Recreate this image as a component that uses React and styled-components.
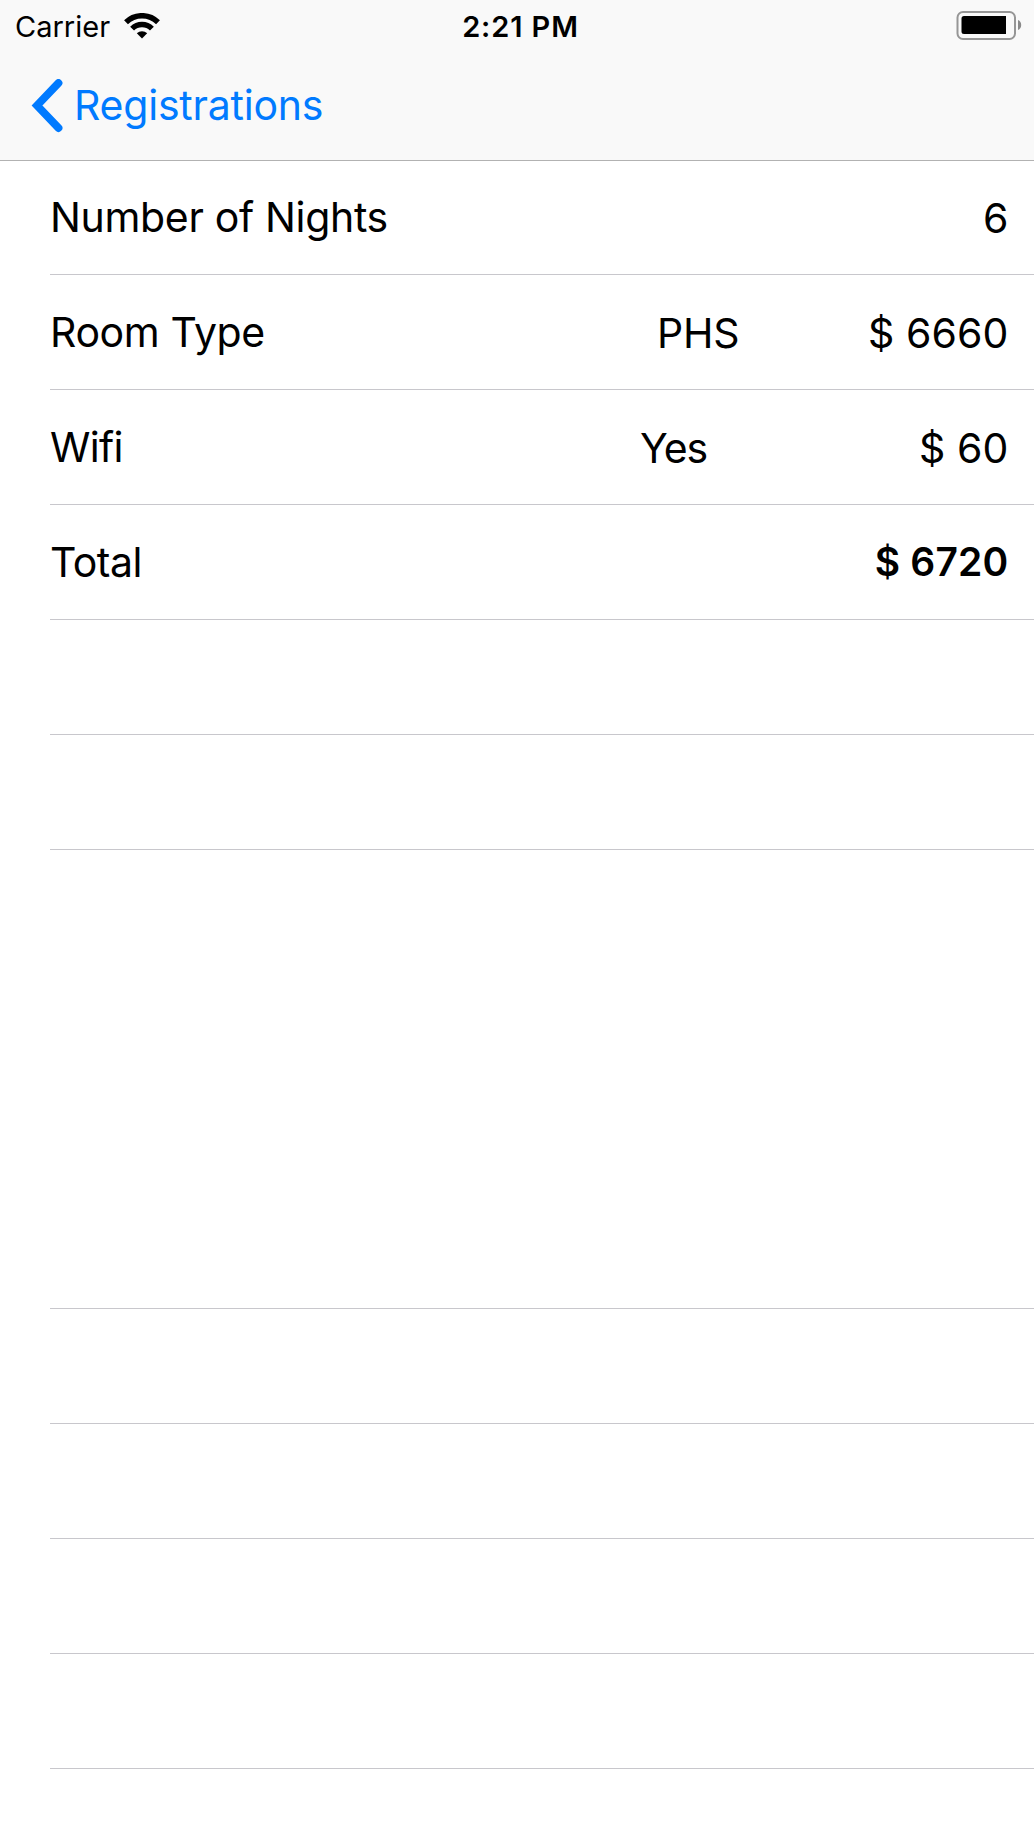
import React from "react";
import styled, { createGlobalStyle } from "styled-components";

const GlobalStyle = createGlobalStyle`
  * { box-sizing: border-box; }
  body {
    margin: 0;
    background: #fff;
    color: #000;
    font-family: Inter, "Liberation Sans", sans-serif;
  }
`;

const Screen = styled.div`
  width: 1034px;
  height: 1839px;
  display: flex;
  flex-direction: column;
  overflow: hidden;
  background: #fff;
`;

const Header = styled.header`
  height: 161px;
  background: #f9f9f9;
  border-bottom: 1px solid #b2b2b2;
`;

const StatusBar = styled.div`
  height: 50px;
  display: grid;
  grid-template-columns: 1fr auto 1fr;
  align-items: center;
  padding: 2px 12px 0 15px;
`;

const Carrier = styled.div`
  display: flex;
  align-items: center;
  gap: 14px;
  font-size: 29px;
  line-height: 36px;
`;

const CarrierName = styled.span`
  padding-top: 1px;
`;

const Clock = styled.div`
  padding: 1px 0 0 4px;
  font-size: 29px;
  line-height: 36px;
  font-weight: 600;
  letter-spacing: 0.9px;
  white-space: nowrap;
`;

const BatterySlot = styled.div`
  display: flex;
  justify-content: flex-end;
`;

const NavBar = styled.nav`
  height: 110px;
  display: flex;
  align-items: flex-start;
  padding: 29px 0 0 31px;
`;

const BackButton = styled.button`
  display: flex;
  align-items: center;
  gap: 11px;
  padding: 0;
  border: 0;
  background: none;
  color: #007aff;
  font: inherit;
  font-size: 41px;
  line-height: 52px;
  letter-spacing: -0.22px;
`;

const BackTitle = styled.span`
  padding-bottom: 2px;
`;

const List = styled.main`
  display: flex;
  flex-direction: column;
  padding-left: 50px;
`;

const Row = styled.div`
  height: ${(p) => p.$height || 115}px;
  flex: none;
  display: flex;
  align-items: center;
  padding: 0 25px ${(p) => p.$lift || 0}px 0;
  border-bottom: 1px solid #c8c7cc;
`;

const Text = styled.span`
  font-size: 41px;
  line-height: 50px;
  letter-spacing: ${(p) => p.$spacing || 0}px;
  white-space: nowrap;
`;

const Label = styled(Text)`
  width: ${(p) => p.$width || 500}px;
`;

const Detail = styled(Text)`
  padding-top: 2px;
`;

const Amount = styled(Text)`
  margin-left: auto;
  padding: 2px 0.5px 0 0;
  letter-spacing: 0.1px;
`;

const TotalAmount = styled(Amount)`
  padding: 0 0.5px 0 0;
  font-size: 39px;
  font-weight: 600;
  letter-spacing: 0.2px;
`;

const WifiIcon = () => (
  <svg width="36" height="26" viewBox="0 0 36 26" fill="none">
    <path d="M2 9.300a22.700 22.700 0 0 1 32 0" stroke="#000" strokeWidth="5.500" />
    <path d="M8.100 15.600a14 14 0 0 1 19.800 0" stroke="#000" strokeWidth="5.500" />
    <path d="M18 25.500l-5.200-5.200a7.400 7.400 0 0 1 10.400 0z" fill="#000" />
  </svg>
);

const BatteryIcon = () => (
  <svg width="66" height="30" viewBox="0 0 66 30">
    <rect x="1.500" y="1" width="57.500" height="27" rx="5.500" fill="none" stroke="#969696" strokeWidth="2" />
    <path d="M8 5h42v18H8a2.500 2.500 0 0 1-2.500-2.500v-13A2.500 2.500 0 0 1 8 5z" fill="#000" />
    <path d="M62 9a5.500 5.500 0 0 1 0 10z" fill="#8a8a8a" />
  </svg>
);

const Chevron = () => (
  <svg width="32" height="54" viewBox="0 0 32 54" fill="none">
    <path d="M27.500 4L6 26.500L27.500 49" stroke="#007aff" strokeWidth="7.800" strokeLinecap="round" strokeLinejoin="miter" />
  </svg>
);

const charges = [
  { label: "Number of Nights", amount: "6", height: 114, spacing: -0.33, lift: 1 },
  { label: "Room Type", detail: "PHS", amount: "$ 6660", start: 607, spacing: -0.4, detailSpacing: -0.2 },
  { label: "Wifi", detail: "Yes", amount: "$ 60", start: 590, spacing: -0.7, detailSpacing: -1 },
  { label: "Total", amount: "$ 6720", total: true, spacing: -0.5 },
];

const emptyRows = [115, 115, 459, 115, 115, 115, 115];

export default function App() {
  return (
    <Screen>
      <GlobalStyle />
      <Header>
        <StatusBar>
          <Carrier><CarrierName>Carrier</CarrierName><WifiIcon /></Carrier>
          <Clock>2:21 PM</Clock>
          <BatterySlot><BatteryIcon /></BatterySlot>
        </StatusBar>
        <NavBar>
          <BackButton><Chevron /><BackTitle>Registrations</BackTitle></BackButton>
        </NavBar>
      </Header>
      <List>
        {charges.map((c) => (
          <Row key={c.label} $height={c.height} $lift={c.lift}>
            <Label $width={c.start} $spacing={c.spacing}>{c.label}</Label>
            {c.detail && <Detail $spacing={c.detailSpacing}>{c.detail}</Detail>}
            {c.total ? <TotalAmount>{c.amount}</TotalAmount> : <Amount>{c.amount}</Amount>}
          </Row>
        ))}
        {emptyRows.map((height, i) => (
          <Row key={i} $height={height} />
        ))}
      </List>
    </Screen>
  );
}
